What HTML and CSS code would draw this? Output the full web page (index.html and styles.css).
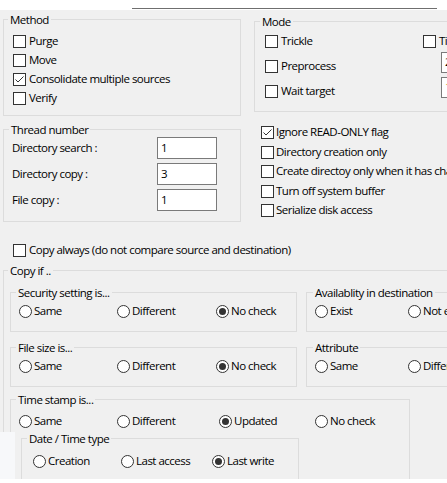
FILE: index.html
```html
<!DOCTYPE html>
<html lang="en">
<head>
  <meta charset="UTF-8">
  <title>Copy options</title>
  <link rel="stylesheet" href="styles.css">
</head>
<body>
  <div class="tabstrip"><div class="tabline"></div></div>

  <div class="dialog">
    <div class="row-top">
      <fieldset class="group method">
        <legend>Method</legend>
        <div class="checklist">
          <label class="check"><span class="box"></span>Purge</label>
          <label class="check"><span class="box"></span>Move</label>
          <label class="check"><span class="box on"><svg viewBox="0 0 11 11"><path d="M1.5 5.5 L4 8 L9.5 2.5"/></svg></span>Consolidate multiple sources</label>
          <label class="check"><span class="box"></span>Verify</label>
        </div>
      </fieldset>

      <fieldset class="group mode">
        <legend>Mode</legend>
        <div class="mode-grid">
          <label class="check"><span class="box"></span>Trickle</label>
          <label class="check"><span class="box"></span>Timer</label>
          <label class="check"><span class="box"></span>Preprocess</label>
          <input type="text" class="edit" value="2">
          <label class="check"><span class="box"></span>Wait target</label>
          <input type="text" class="edit warn" value="1">
        </div>
      </fieldset>
    </div>

    <div class="row-mid">
      <fieldset class="group thread">
        <legend>Thread number</legend>
        <div class="thread-grid">
          <span>Directory search :</span>
          <input type="text" value="1">
          <span>Directory copy :</span>
          <input type="text" value="3">
          <span>File copy :</span>
          <input type="text" value="1">
        </div>
      </fieldset>

      <div class="options">
        <label class="check"><span class="box on"><svg viewBox="0 0 11 11"><path d="M1.5 5.5 L4 8 L9.5 2.5"/></svg></span>Ignore READ-ONLY flag</label>
        <label class="check"><span class="box"></span>Directory creation only</label>
        <label class="check"><span class="box"></span>Create directoy only when it has changed files</label>
        <label class="check"><span class="box"></span>Turn off system buffer</label>
        <label class="check"><span class="box"></span>Serialize disk access</label>
      </div>
    </div>

    <label class="check copy-always"><span class="box"></span>Copy always (do not compare source and destination)</label>

    <fieldset class="group copyif">
      <legend>Copy if ..</legend>
      <div class="copyif-body">
        <div class="pair">
          <fieldset class="group left-group">
            <legend>Security setting is...</legend>
            <div class="radios cols3">
              <label class="opt"><span class="radio"></span>Same</label>
              <label class="opt"><span class="radio"></span>Different</label>
              <label class="opt"><span class="radio on"></span>No check</label>
            </div>
          </fieldset>
          <fieldset class="group right-group">
            <legend>Availablity in destination</legend>
            <div class="radios cols2">
              <label class="opt"><span class="radio"></span>Exist</label>
              <label class="opt"><span class="radio"></span>Not exist</label>
            </div>
          </fieldset>
        </div>

        <div class="pair second">
          <fieldset class="group left-group">
            <legend>File size is...</legend>
            <div class="radios cols3">
              <label class="opt"><span class="radio"></span>Same</label>
              <label class="opt"><span class="radio"></span>Different</label>
              <label class="opt"><span class="radio on"></span>No check</label>
            </div>
          </fieldset>
          <fieldset class="group right-group">
            <legend>Attribute</legend>
            <div class="radios cols2">
              <label class="opt"><span class="radio"></span>Same</label>
              <label class="opt"><span class="radio"></span>Different</label>
            </div>
          </fieldset>
        </div>

        <fieldset class="group timestamp">
          <legend>Time stamp is...</legend>
          <div class="radios cols4">
            <label class="opt"><span class="radio"></span>Same</label>
            <label class="opt"><span class="radio"></span>Different</label>
            <label class="opt"><span class="radio on"></span>Updated</label>
            <label class="opt"><span class="radio"></span>No check</label>
          </div>
          <fieldset class="group datetime">
            <legend>Date / Time type</legend>
            <div class="radios dt">
              <label class="opt"><span class="radio"></span>Creation</label>
              <label class="opt"><span class="radio"></span>Last access</label>
              <label class="opt"><span class="radio on"></span>Last write</label>
            </div>
          </fieldset>
        </fieldset>
      </div>
    </fieldset>

    <div class="corner"></div>
  </div>
</body>
</html>
```

FILE: styles.css
```css
body {
  margin: 0;
  background: #fff;
  font-family: "Open Sans", "Noto Sans", sans-serif;
  font-size: 11.5px;
  letter-spacing: -0.5px;
  line-height: 15px;
  color: #000;
  overflow: hidden;
}
.tabstrip {
  height: 10px;
  background: #fff;
}
.tabline {
  margin-left: 132px;
  width: 305px;
  height: 8px;
  border-bottom: 1px solid #6f6f6f;
}
.dialog {
  position: relative;
  height: 469px;
  background: #f0f0f0;
  padding-left: 3px;
  overflow: hidden;
}
.group {
  margin: 0;
  padding: 0;
  border: 1px solid #dcdcdc;
  min-width: 0;
  box-sizing: border-box;
}
.group legend {
  padding: 0 2px;
  margin-left: 4px;
  line-height: 15px;
}

/* checkboxes - text sits 1px above the box centre, like the native control */
.check {
  display: flex;
  align-items: center;
  height: 19px;
  box-sizing: border-box;
  padding-bottom: 2px;
  white-space: nowrap;
}
.box {
  width: 13px;
  height: 13px;
  box-sizing: border-box;
  border: 1px solid #333;
  background: #fff;
  margin: 2px 3px 0 0;
  flex: none;
}
.box svg {
  display: block;
  width: 11px;
  height: 11px;
  fill: none;
  stroke: #333;
  stroke-width: 1;
}

/* radios */
.opt {
  display: flex;
  align-items: center;
  height: 19px;
  box-sizing: border-box;
  padding-bottom: 2px;
  white-space: nowrap;
}
.radio {
  width: 13px;
  height: 13px;
  box-sizing: border-box;
  border: 1px solid #333;
  border-radius: 50%;
  background: #fff;
  margin: 2px 2px 0 0;
  flex: none;
  display: flex;
  align-items: center;
  justify-content: center;
}
.radio.on::after {
  content: "";
  width: 7px;
  height: 7px;
  border-radius: 50%;
  background: #333;
}
.radios {
  display: grid;
  padding: 2px 0 10px 8px;
}
.cols3 { grid-template-columns: 98px 99px auto; }
.cols2 { grid-template-columns: 93px auto; }
.cols4 {
  grid-template-columns: 98px 102px 96px auto;
  padding: 5px 0 0 8px;
}
.dt {
  grid-template-columns: 88px 91px auto;
  padding: 5.5px 0 8px 11px;
}

/* edits */
input[type="text"] {
  width: 60px;
  height: 22px;
  box-sizing: border-box;
  margin: 0;
  padding: 0 3px 1px;
  border: 1px solid #7a7a7a;
  background: #fff;
  font: inherit;
  color: #000;
  outline: none;
}

/* top row */
.row-top {
  display: flex;
  align-items: flex-start;
  gap: 13px;
  padding-top: 2px;
}
.method { width: 238px; flex: none; }
.checklist { padding: 5px 0 7px 9px; }
.mode {
  width: 260px;
  flex: none;
  margin-top: 1.5px;
}
.mode legend { margin-left: 5px; }
.mode-grid {
  display: grid;
  grid-template-columns: 158px auto;
  grid-auto-rows: 25px;
  align-items: center;
  padding: 0 0 7px 10px;
}
.mode-grid .edit {
  align-self: start;
  margin: -2px 0 0 18px;
  height: 21px;
}
.mode-grid .warn { color: #c9a227; }

/* thread + options */
.row-mid {
  display: flex;
  align-items: flex-start;
  margin-top: 6px;
}
.thread { width: 238px; flex: none; }
.thread legend { margin-left: 5px; }
.thread-grid {
  display: grid;
  grid-template-columns: 145px 60px;
  grid-auto-rows: 22px;
  row-gap: 4px;
  align-items: center;
  padding: 0 0 10px 8px;
}
.thread-grid span { padding-bottom: 1px; }
.options {
  margin-left: 20px;
  padding-top: 1px;
}
.options .check { height: 19.5px; }
.options .box { margin-right: 2px; }

/* copy section */
.copy-always {
  margin: 18.5px 0 0 10px;
}
.copyif {
  width: 600px;
  margin-top: 3px;
}
.copyif-body { padding: 7.5px 0 20px 6px; }
.pair {
  display: flex;
  gap: 9px;
  align-items: flex-start;
}
.pair.second { margin-top: 8px; }
.left-group { width: 287px; flex: none; }
.left-group legend { margin-left: 5px; }
.right-group { width: 200px; flex: none; }
.right-group legend { margin-left: 6px; }
.timestamp {
  width: 400px;
  margin-top: 5px;
  padding-bottom: 20px;
}
.timestamp legend { margin-left: 5px; }
.datetime {
  width: 278px;
  margin-left: 10px;
}

.corner {
  position: absolute;
  left: 0;
  top: 422px;
  bottom: 0;
  width: 15px;
  background: #f7f8fa;
}
```
